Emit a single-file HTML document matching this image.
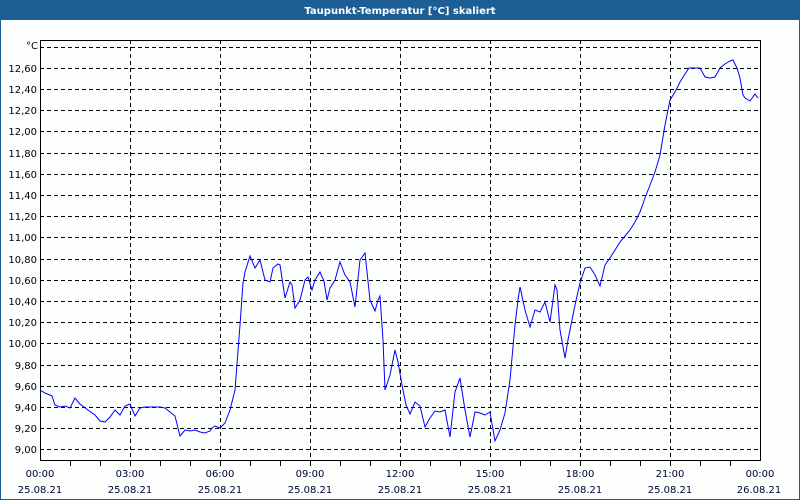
<!DOCTYPE html>
<html><head><meta charset="utf-8"><style>
html,body{margin:0;padding:0;width:800px;height:500px;overflow:hidden;background:#fff}
svg{display:block}
text{font-family:"DejaVu Sans","Liberation Sans",sans-serif;font-size:10px}
</style></head><body>
<svg width="800" height="500" xmlns="http://www.w3.org/2000/svg">
<rect x="0" y="0" width="800" height="500" fill="#fdfefe"/>
<rect x="0.5" y="0.5" width="799" height="499" fill="none" stroke="#1d5f95"/>
<rect x="0" y="0" width="800" height="20" fill="#1d5f95"/>
<text x="400" y="14" fill="#fff" font-weight="bold" text-anchor="middle" style="font-size:10px">Taupunkt-Temperatur [°C] skaliert</text>
<g stroke="#000" stroke-dasharray="4,3" stroke-width="1">
<path d="M40 47.5H760M40 68.5H760M40 89.5H760M40 110.5H760M40 131.5H760M40 153.5H760M40 174.5H760M40 195.5H760M40 216.5H760M40 237.5H760M40 259.5H760M40 280.5H760M40 301.5H760M40 322.5H760M40 343.5H760M40 365.5H760M40 386.5H760M40 407.5H760M40 428.5H760M40 449.5H760"/>
<path d="M130.5 40V460M220.5 40V460M310.5 40V460M400.5 40V460M490.5 40V460M580.5 40V460M670.5 40V460"/>
</g>
<g stroke="#000" fill="none">
<path d="M40.5 40.5H760.5V460.5H40.5Z"/>
<path d="M70.5 460V466M100.5 460V466M130.5 460V466M160.5 460V466M190.5 460V466M220.5 460V466M250.5 460V466M280.5 460V466M310.5 460V466M340.5 460V466M370.5 460V466M400.5 460V466M430.5 460V466M460.5 460V466M490.5 460V466M520.5 460V466M550.5 460V466M580.5 460V466M610.5 460V466M640.5 460V466M670.5 460V466M700.5 460V466M730.5 460V466"/>
</g>
<g fill="#000" text-anchor="end">
<text x="38" y="49">°C</text>
<text x="37" y="72">12,60</text><text x="37" y="93">12,40</text><text x="37" y="114">12,20</text><text x="37" y="135">12,00</text><text x="37" y="157">11,80</text><text x="37" y="178">11,60</text><text x="37" y="199">11,40</text><text x="37" y="220">11,20</text><text x="37" y="241">11,00</text><text x="37" y="263">10,80</text><text x="37" y="284">10,60</text><text x="37" y="305">10,40</text><text x="37" y="326">10,20</text><text x="37" y="347">10,00</text><text x="37" y="369">9,80</text><text x="37" y="390">9,60</text><text x="37" y="411">9,40</text><text x="37" y="432">9,20</text><text x="37" y="453">9,00</text>
</g>
<g fill="#000030" text-anchor="middle">
<text x="40" y="477">00:00</text><text x="40" y="493">25.08.21</text>
<text x="130" y="477">03:00</text><text x="130" y="493">25.08.21</text>
<text x="220" y="477">06:00</text><text x="220" y="493">25.08.21</text>
<text x="310" y="477">09:00</text><text x="310" y="493">25.08.21</text>
<text x="400" y="477">12:00</text><text x="400" y="493">25.08.21</text>
<text x="490" y="477">15:00</text><text x="490" y="493">25.08.21</text>
<text x="580" y="477">18:00</text><text x="580" y="493">25.08.21</text>
<text x="670" y="477">21:00</text><text x="670" y="493">25.08.21</text>
<text x="760" y="477">00:00</text><text x="759" y="493">26.08.21</text>
</g>
<polyline fill="none" stroke="#0000ff" stroke-width="1" points="40,390 45,393 52,396 55,405 60,407 65,406 70,408 75,398 80,404 88,410 95,415 100,421 105,422 110,417 115,410 120,415 125,406 130,404 135,416 140,408 145,407 150,407 160,407 165,408 170,412 175,416 180,436 185,430 190,431 195,430 200,432 205,433 210,431 212,428 215,426 220,428 225,423 230,410 235,390 240,325 243,283 245,272 250,256 255,268 260,260 265,280 270,282 273,268 278,264 280,265 285,298 290,282 292,285 295,308 300,300 305,280 308,277 312,290 315,280 320,272 324,281 327,300 330,288 335,280 340,262 345,275 350,282 355,307 360,260 365,253 370,300 375,311 378,300 380,296 383,340 385,390 390,375 395,350 398,362 402,385 406,405 410,414 415,402 420,406 425,427 430,418 435,411 440,412 445,410 450,437 455,392 460,378 465,410 470,437 475,412 480,413 485,415 490,412 495,441 500,430 505,413 510,380 515,325 518,300 520,287 525,310 530,327 535,310 540,312 545,302 550,322 555,285 557,290 560,330 565,358 568,340 570,330 575,305 580,283 585,268 590,267 595,275 600,286 605,265 610,258 615,250 620,242 625,236 630,230 635,222 640,212 645,198 650,185 655,172 660,155 665,125 670,100 675,92 680,82 685,74 689,68 700,68 705,77 710,78 715,77 720,68 725,64 730,61 733,60 737,68 740,78 743,95 745,98 750,101 755,94 758,98"/>
</svg>
</body></html>
